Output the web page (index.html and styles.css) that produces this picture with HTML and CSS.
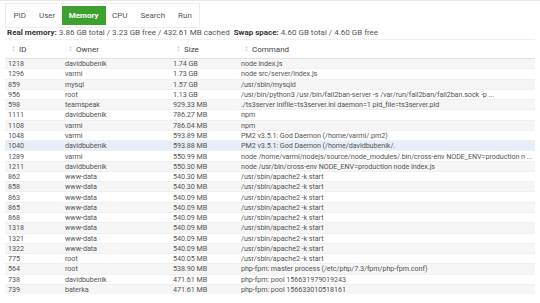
FILE: index.html
```html
<!DOCTYPE html>
<html lang="en">
<head>
    <meta charset="UTF-8">
    <meta name="viewport" content="width=device-width, initial-scale=1.0">
    <title>Processes</title>
    <link rel="stylesheet" href="styles.css">
</head>
<body>
    <div class="page">
        <div class="tabs">
            <span class="tab">PID</span>
            <span class="tab">User</span>
            <span class="tab active">Memory</span>
            <span class="tab">CPU</span>
            <span class="tab">Search</span>
            <span class="tab">Run</span>
        </div>
        <div class="summary">
            <b>Real memory:</b> 3.86 GB total / 3.23 GB free / 432.61 MB cached
            <span class="swap"><b>Swap space:</b> 4.60 GB total / 4.60 GB free</span>
        </div>
        <table id="procs">
            <colgroup>
                <col class="c-id">
                <col class="c-owner">
                <col class="c-size">
                <col>
            </colgroup>
            <thead>
                <tr>
                    <th><svg class="sort" viewBox="0 0 4 8"><path d="M2 0L4 3H0z M2 8L0 5h4z"/></svg>ID</th>
                    <th><svg class="sort" viewBox="0 0 4 8"><path d="M2 0L4 3H0z M2 8L0 5h4z"/></svg>Owner</th>
                    <th><svg class="sort" viewBox="0 0 4 8"><path d="M2 0L4 3H0z M2 8L0 5h4z"/></svg>Size</th>
                    <th><svg class="sort" viewBox="0 0 4 8"><path d="M2 0L4 3H0z M2 8L0 5h4z"/></svg>Command</th>
                </tr>
            </thead>
            <tbody>
                <tr><td>1218</td><td>davidbubenik</td><td>1.74 GB</td><td>node index.js</td></tr>
                <tr><td>1296</td><td>varmi</td><td>1.73 GB</td><td>node src/server/index.js</td></tr>
                <tr><td>859</td><td>mysql</td><td>1.57 GB</td><td>/usr/sbin/mysqld</td></tr>
                <tr><td>956</td><td>root</td><td>1.13 GB</td><td>/usr/bin/python3 /usr/bin/fail2ban-server -s /var/run/fail2ban/fail2ban.sock -p ...</td></tr>
                <tr><td>598</td><td>teamspeak</td><td>929.33 MB</td><td>./ts3server inifile=ts3server.ini daemon=1 pid_file=ts3server.pid</td></tr>
                <tr><td>1111</td><td>davidbubenik</td><td>786.27 MB</td><td>npm</td></tr>
                <tr><td>1108</td><td>varmi</td><td>786.04 MB</td><td>npm</td></tr>
                <tr><td>1048</td><td>varmi</td><td>593.89 MB</td><td>PM2 v3.5.1: God Daemon (/home/varmi/.pm2)</td></tr>
                <tr class="hover"><td>1040</td><td>davidbubenik</td><td>593.88 MB</td><td>PM2 v3.5.1: God Daemon (/home/davidbubenik/.</td></tr>
                <tr><td>1289</td><td>varmi</td><td>550.99 MB</td><td>node /home/varmi/nodejs/source/node_modules/.bin/cross-env NODE_ENV=production n ...</td></tr>
                <tr><td>1211</td><td>davidbubenik</td><td>550.30 MB</td><td>node /usr/bin/cross-env NODE_ENV=production node index.js</td></tr>
                <tr><td>862</td><td>www-data</td><td>540.30 MB</td><td>/usr/sbin/apache2 -k start</td></tr>
                <tr><td>858</td><td>www-data</td><td>540.30 MB</td><td>/usr/sbin/apache2 -k start</td></tr>
                <tr><td>863</td><td>www-data</td><td>540.09 MB</td><td>/usr/sbin/apache2 -k start</td></tr>
                <tr><td>865</td><td>www-data</td><td>540.09 MB</td><td>/usr/sbin/apache2 -k start</td></tr>
                <tr><td>868</td><td>www-data</td><td>540.09 MB</td><td>/usr/sbin/apache2 -k start</td></tr>
                <tr><td>1318</td><td>www-data</td><td>540.09 MB</td><td>/usr/sbin/apache2 -k start</td></tr>
                <tr><td>1321</td><td>www-data</td><td>540.09 MB</td><td>/usr/sbin/apache2 -k start</td></tr>
                <tr><td>1322</td><td>www-data</td><td>540.09 MB</td><td>/usr/sbin/apache2 -k start</td></tr>
                <tr><td>775</td><td>root</td><td>540.05 MB</td><td>/usr/sbin/apache2 -k start</td></tr>
                <tr><td>564</td><td>root</td><td>538.90 MB</td><td>php-fpm: master process (/etc/php/7.3/fpm/php-fpm.conf)</td></tr>
                <tr><td>738</td><td>davidbubenik</td><td>471.61 MB</td><td>php-fpm: pool 156631979019243</td></tr>
                <tr><td>739</td><td>baterka</td><td>471.61 MB</td><td>php-fpm: pool 156633010518161</td></tr>
            </tbody>
        </table>
    </div>
</body>
</html>
```
FILE: styles.css
```css
body {
    margin: 0;
    background: #fff;
    font-family: Roboto, "Liberation Sans", sans-serif;
    font-size: 8px;
    color: #555;
}
.page {
    border-top: 1px solid #e8e8e8;
    padding: 2px 5px 0 5px;
}
.tabs {
    display: inline-flex;
    border: 1px solid #ececec;
    padding: 2px 1px;
}
.tab {
    padding: 0 6.5px;
    height: 19px;
    line-height: 19px;
    color: #555;
}
.tab.active {
    background: #3da130;
    color: #fff;
    font-weight: bold;
    padding: 0 7px;
}
.summary {
    padding: 0 2px;
    height: 10px;
    line-height: 10px;
    color: #555;
}
.summary b {
    color: #333;
}
.swap {
    margin-left: 2px;
}
#procs {
    width: 100%;
    margin-top: 1px;
    border-collapse: collapse;
    table-layout: fixed;
    font-size: 7.2px;
}
.c-id { width: 57px; }
.c-owner { width: 108px; }
.c-size { width: 68px; }
#procs th {
    text-align: left;
    font-weight: normal;
    font-size: 8px;
    color: #444;
    height: 18px;
    padding: 0 0 0 7px;
    border-top: 1px solid #f0f0f0;
    border-bottom: 1px solid #e3e3e3;
}
.sort {
    width: 3px;
    height: 6px;
    margin-right: 4px;
    fill: #d8d8d8;
    vertical-align: -0.5px;
}
#procs td {
    height: 9.27px;
    padding: 0 0 0 3px;
    line-height: 9px;
    border-top: 1px solid #f0f0f0;
    white-space: nowrap;
    overflow: hidden;
    letter-spacing: -0.06px;
}
#procs tbody tr:nth-child(odd) {
    background: #f6f6f6;
}
#procs tbody tr.hover {
    background: #e8eef7;
}
```
